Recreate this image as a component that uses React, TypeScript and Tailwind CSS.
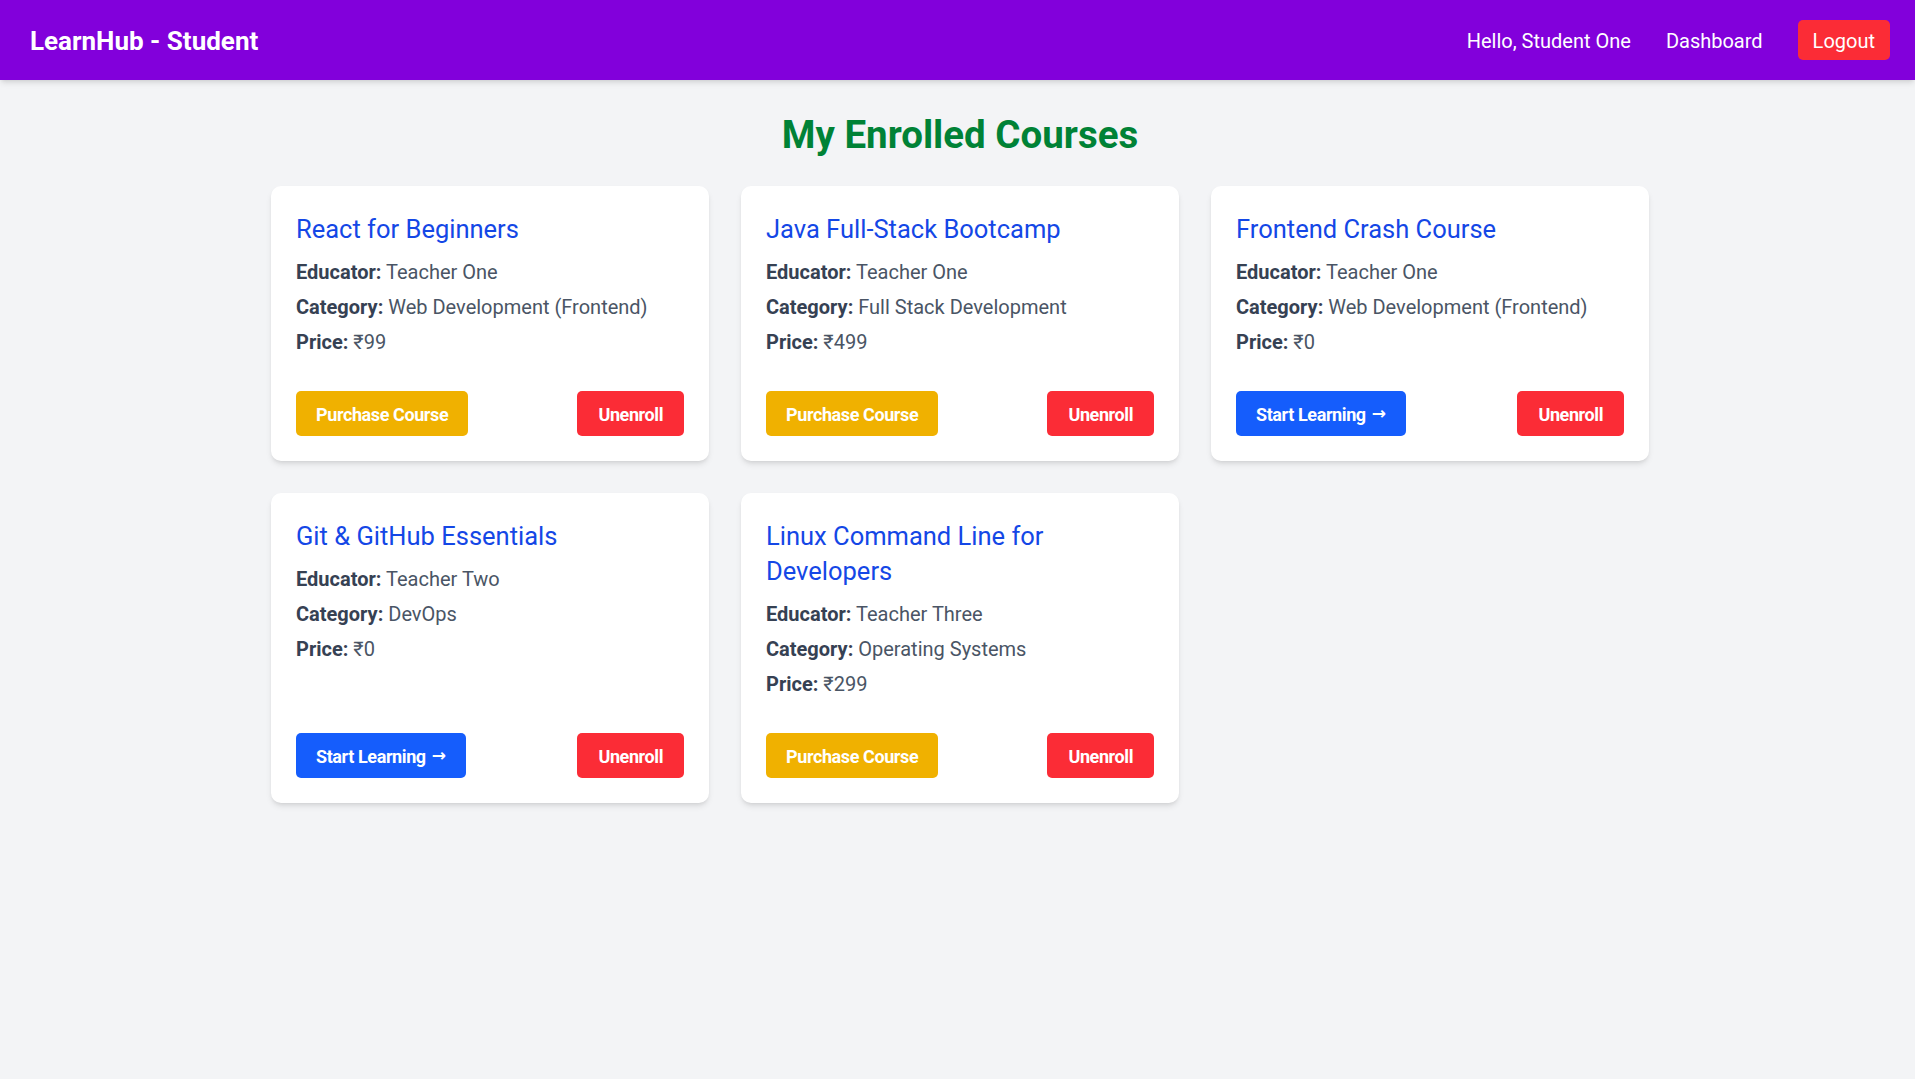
import React from "react";

type Course = {
  title: string;
  educator: string;
  category: string;
  price: string;
  purchased: boolean;
};

const courses: Course[] = [
  { title: "React for Beginners", educator: "Teacher One", category: "Web Development (Frontend)", price: "₹99", purchased: false },
  { title: "Java Full-Stack Bootcamp", educator: "Teacher One", category: "Full Stack Development", price: "₹499", purchased: false },
  { title: "Frontend Crash Course", educator: "Teacher One", category: "Web Development (Frontend)", price: "₹0", purchased: true },
  { title: "Git & GitHub Essentials", educator: "Teacher Two", category: "DevOps", price: "₹0", purchased: true },
  { title: "Linux Command Line for Developers", educator: "Teacher Three", category: "Operating Systems", price: "₹299", purchased: false },
];

function Row({ label, value }: { label: string; value: string }) {
  return (
    <p className="text-[20px] leading-[30px] text-[#4a5565]">
      <span className="font-bold text-[#364153]">{label}:</span> {value}
    </p>
  );
}

function CourseCard({ c }: { c: Course }) {
  return (
    <div className="flex flex-col bg-white rounded-[10px] shadow-md px-[25px] pt-[26px] pb-[25px]">
      <h3 className="text-[25.5px] leading-[35px] text-[#1447e6] mb-[10px] pr-[60px]">{c.title}</h3>
      <div className="flex flex-col gap-[5px]">
        <Row label="Educator" value={c.educator} />
        <Row label="Category" value={c.category} />
        <Row label="Price" value={c.price} />
      </div>
      <div className="mt-auto pt-[34px] flex justify-between items-center">
        {c.purchased ? (
          <button className="h-[45px] px-[20px] pt-[1px] rounded-[5px] bg-[#155dfc] text-white text-[18px] tracking-[-0.4px] font-bold flex items-center">
            Start Learning<span className="ml-[6px] text-[17px]" style={{ fontFamily: "'DejaVu Sans', sans-serif" }}>→</span>
          </button>
        ) : (
          <button className="h-[45px] px-[20px] pt-[1px] rounded-[5px] bg-[#f0b100] text-white text-[18px] tracking-[-0.4px] font-bold">
            Purchase Course
          </button>
        )}
        <button className="h-[45px] px-[21px] pt-[1px] rounded-[5px] bg-[#fb2c36] text-white text-[18px] tracking-[-0.4px] font-bold">
          Unenroll
        </button>
      </div>
    </div>
  );
}

export default function App() {
  return (
    <div className="min-h-screen bg-[#f3f4f6]" style={{ fontFamily: "Roboto, 'Noto Sans', sans-serif" }}>
      <nav className="h-[80px] bg-[#8200db] shadow-md flex items-center justify-between pl-[30px] pr-[25px]">
        <div className="text-[26px] font-bold text-white pt-[3px]">LearnHub - Student</div>
        <div className="flex items-center gap-[35px] text-[20px] text-white">
          <span className="pt-[2px]">Hello, Student One</span>
          <span className="pt-[2px]">Dashboard</span>
          <button className="h-[40px] px-[15px] pt-[2px] rounded-[5px] bg-[#fb2c36] text-white text-[20px]">Logout</button>
        </div>
      </nav>
      <main className="flex flex-col items-center pt-[32px] pl-[5px]">
        <h1 className="text-[38.5px] leading-[45px] font-bold text-[#008236] mb-[29px]">My Enrolled Courses</h1>
        <div className="grid grid-cols-3 gap-[32px] w-[1378px]">
          {courses.map((c) => (
            <CourseCard key={c.title} c={c} />
          ))}
        </div>
      </main>
    </div>
  );
}
